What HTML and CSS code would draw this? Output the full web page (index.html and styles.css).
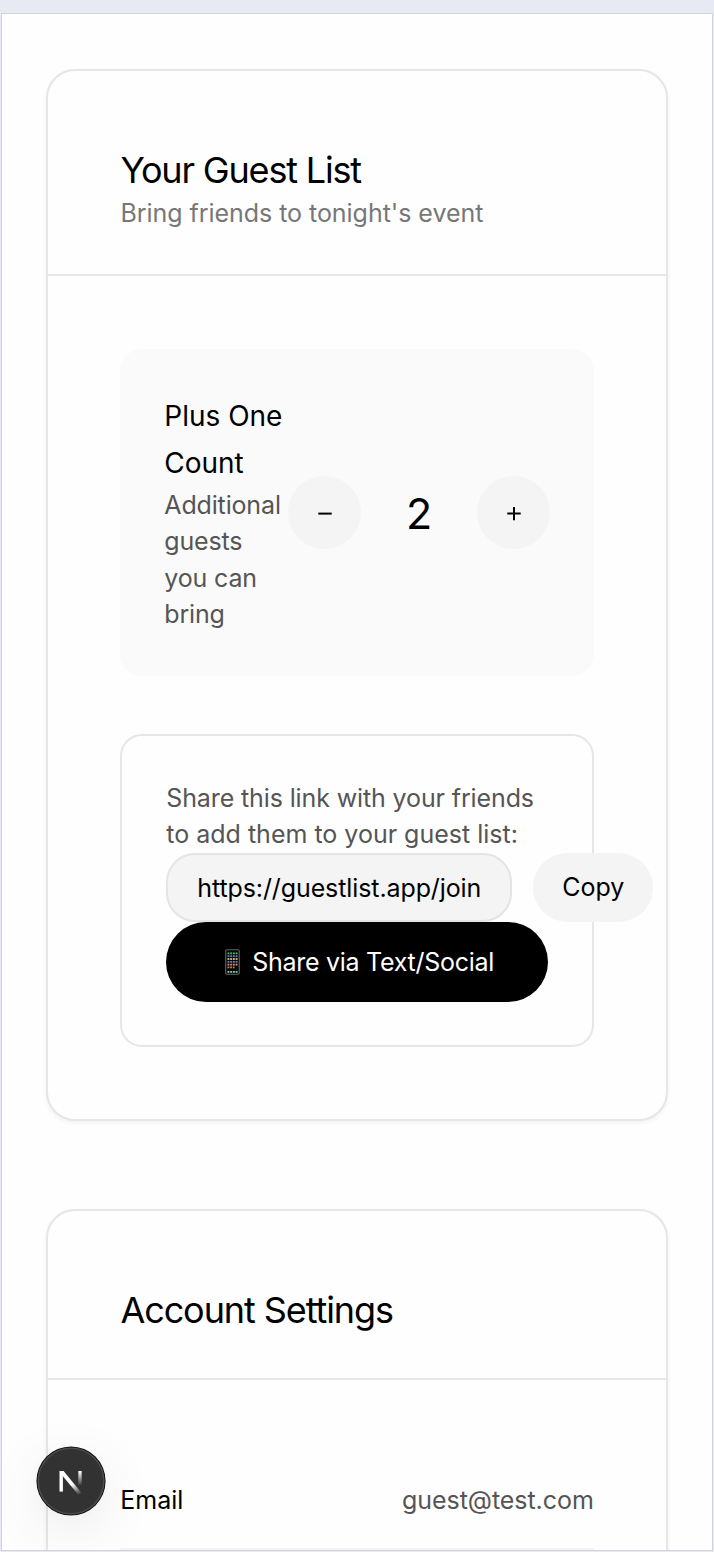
FILE: index.html
```html
<!DOCTYPE html>
<html lang="en">
<head>
<meta charset="utf-8">
<title>Guest List</title>
<link rel="stylesheet" href="styles.css">
</head>
<body>
<div class="viewport">
  <main class="page">
    <section class="card">
      <header class="card-header">
        <h2 class="title title-guest">Your Guest List</h2>
        <p class="subtitle">Bring friends to tonight's event</p>
      </header>
      <div class="card-body">
        <div class="plus-box">
          <div class="plus-copy">
            <div class="plus-title">Plus One<br>Count</div>
            <div class="plus-text">Additional<br>guests<br>you can<br>bring</div>
          </div>
          <div class="stepper">
            <button class="round" aria-label="Decrease"><svg width="16" height="16" viewBox="0 0 16 16"><path d="M1.3 8.6H14.7" stroke="#000" stroke-width="2"/></svg></button>
            <span class="count">2</span>
            <button class="round" aria-label="Increase"><svg width="16" height="16" viewBox="0 0 16 16"><path d="M1.3 8.6H14.7M8 1.9V15.3" stroke="#000" stroke-width="2"/></svg></button>
          </div>
        </div>
        <div class="share-box">
          <p class="share-text"><span class="line-a">Share this link with your friends</span><br><span class="line-b">to add them to your guest list:</span></p>
          <div class="link-row">
            <div class="link-field">https://guestlist.app/join</div>
            <button class="copy">Copy</button>
          </div>
          <button class="share-button">
            <svg class="phone" width="15" height="26" viewBox="0 0 15 26">
              <rect x=".7" y=".7" width="13.6" height="24.6" rx="1.2" fill="#080808" stroke="#606060" stroke-width="1.1"/>
              <g stroke-width="1.8" fill="none">
                <path d="M2.5 4.4h10" stroke="#55b66a" stroke-dasharray="1.9 .8"/>
                <path d="M2.5 7.2h10" stroke="#4f88b8" stroke-dasharray="1.9 .8"/>
                <path d="M2.5 10h10" stroke="#c8a880" stroke-dasharray="1.9 .8"/>
                <path d="M2.5 12.8h10" stroke="#7370c0" stroke-dasharray="1.9 .8"/>
                <path d="M2.5 15.6h10" stroke="#c79a50" stroke-dasharray="1.9 .8"/>
                <path d="M2.5 18.4h7" stroke="#d66d6d" stroke-dasharray="1.9 .8"/>
                <path d="M2.5 22.8h10" stroke="#77d39a" stroke-dasharray="1.9 .8"/>
              </g>
            </svg>
            <span>Share via Text/Social</span>
          </button>
        </div>
      </div>
    </section>
    <section class="card">
      <header class="card-header">
        <h2 class="title title-account">Account Settings</h2>
      </header>
      <div class="card-body">
        <div class="row"><span class="label">Email</span><span class="value">guest@test.com</span></div>
      </div>
    </section>
  </main>
  <div class="badge">
    <svg width="70" height="70" viewBox="0 0 70 70">
      <defs>
        <linearGradient id="diag" gradientUnits="userSpaceOnUse" x1="38" y1="37" x2="45" y2="48"><stop stop-color="#fff"/><stop offset="1" stop-color="#fff" stop-opacity="0"/></linearGradient>
        <linearGradient id="stem" gradientUnits="userSpaceOnUse" x1="0" y1="25" x2="0" y2="40"><stop stop-color="#fff"/><stop offset="1" stop-color="#fff" stop-opacity="0"/></linearGradient>
      </defs>
      <circle cx="35" cy="35" r="34.6" fill="#111"/>
      <circle cx="35" cy="35" r="32.8" fill="#323232" stroke="#4b4b4b" stroke-width="1.6"/>
      <path d="M25.2 45.6V25" stroke="#fff" stroke-width="3.4" fill="none"/>
      <path d="M23.6 25H27.6L46.2 47.8L43.4 49.9L25.6 28.7Z" fill="url(#diag)"/>
      <path d="M44 25V39.5" stroke="url(#stem)" stroke-width="3.4"/>
    </svg>
  </div>
</div>
</body>
</html>
```
FILE: styles.css
```css
* { box-sizing: border-box; }
body {
  margin: 0;
  padding: 13px 0 1px 1px;
  height: 1552px;
  overflow: hidden;
  background: #e7eaf3;
  font-family: Inter, "Liberation Sans", sans-serif;
  color: #000;
}
h2, p { margin: 0; font-weight: 400; }
button { border: 0; padding: 0; font: inherit; color: inherit; }
.viewport {
  position: relative;
  width: 712px;
  height: 1538px;
  overflow: hidden;
  border: 1px solid #d2d3da;
  background: #fefefe;
}
.page {
  display: flex;
  flex-direction: column;
  gap: 88px;
  padding: 55px 43.6px 0;
}
.card {
  width: 622.4px;
  border: 2px solid #e6e6e7;
  border-radius: 29px;
  background: #fefefe;
  box-shadow: 0 2px 4px rgba(0, 0, 0, .05);
}
.card-header {
  padding: 74px 73px 43.4px 72.8px;
  border-bottom: 2px solid #e6e6e7;
}
.title {
  font-size: 36px;
  line-height: 50.6px;
  white-space: nowrap;
}
.title-guest { letter-spacing: -1.17px; }
.title-account { letter-spacing: -1.08px; font-variant-ligatures: none; }
.title + .subtitle { margin-top: -1px; }
.title:last-child { margin-bottom: -1px; }
.subtitle {
  color: #777;
  font-size: 25px;
  letter-spacing: -.04px;
  line-height: 36.4px;
  white-space: nowrap;
}
.card-body { padding: 73px 72.2px 72px 72.7px; }
.plus-box {
  display: flex;
  align-items: center;
  justify-content: space-between;
  height: 327px;
  padding: 44px 43.8px 44px 44px;
  border-radius: 22px;
  background: #fafafa;
}
.plus-copy { width: 118px; white-space: nowrap; }
.plus-title { font-size: 28px; line-height: 47px; }
.plus-text { font-size: 25px; line-height: 36.4px; letter-spacing: -.15px; color: #555; }
.stepper { display: flex; align-items: center; flex: none; }
.round {
  display: grid;
  place-items: center;
  width: 73px;
  height: 73px;
  border-radius: 50%;
  background: #f4f4f4;
}
.count { width: 116px; text-align: center; font-size: 43px; }
.share-box {
  height: 313px;
  margin-top: 58px;
  padding: 43.8px 44px;
  border: 2px solid #e6e6e7;
  border-radius: 22px;
}
.share-text {
  color: #555;
  font-size: 25px;
  line-height: 36px;
  white-space: nowrap;
}
.line-a { letter-spacing: -.12px; }
.link-row { display: flex; gap: 21px; width: 487px; margin-top: .4px; }
.link-field {
  width: 346px;
  height: 69px;
  padding-left: 29px;
  border: 2px solid #e4e4e5;
  border-radius: 29px;
  background: #f4f4f4;
  font-size: 25px;
  letter-spacing: -.1px;
  line-height: 66px;
  white-space: nowrap;
}
.copy {
  width: 120px;
  height: 69px;
  border-radius: 35px;
  background: #f4f4f4;
  font-size: 25px;
}
.share-button {
  display: flex;
  align-items: center;
  gap: 12px;
  width: 382px;
  height: 80px;
  padding: 1px 0 0 59px;
  border-radius: 40px;
  background: #000;
  color: #fff;
  font-size: 25px;
  letter-spacing: -.28px;
  white-space: nowrap;
}
.row {
  display: flex;
  align-items: center;
  justify-content: space-between;
  height: 97px;
  padding-bottom: 2px;
  border-bottom: 2px solid #f4f4f4;
  font-size: 25px;
}
.value { color: #555; letter-spacing: -.05px; }
.badge {
  position: absolute;
  left: 34px;
  top: 1432px;
  width: 70px;
  height: 70px;
  border-radius: 50%;
  box-shadow: 0 15px 56px rgba(0, 0, 0, .08), 0 2px 8px rgba(0, 0, 0, .02);
}
.badge svg { display: block; }
```
